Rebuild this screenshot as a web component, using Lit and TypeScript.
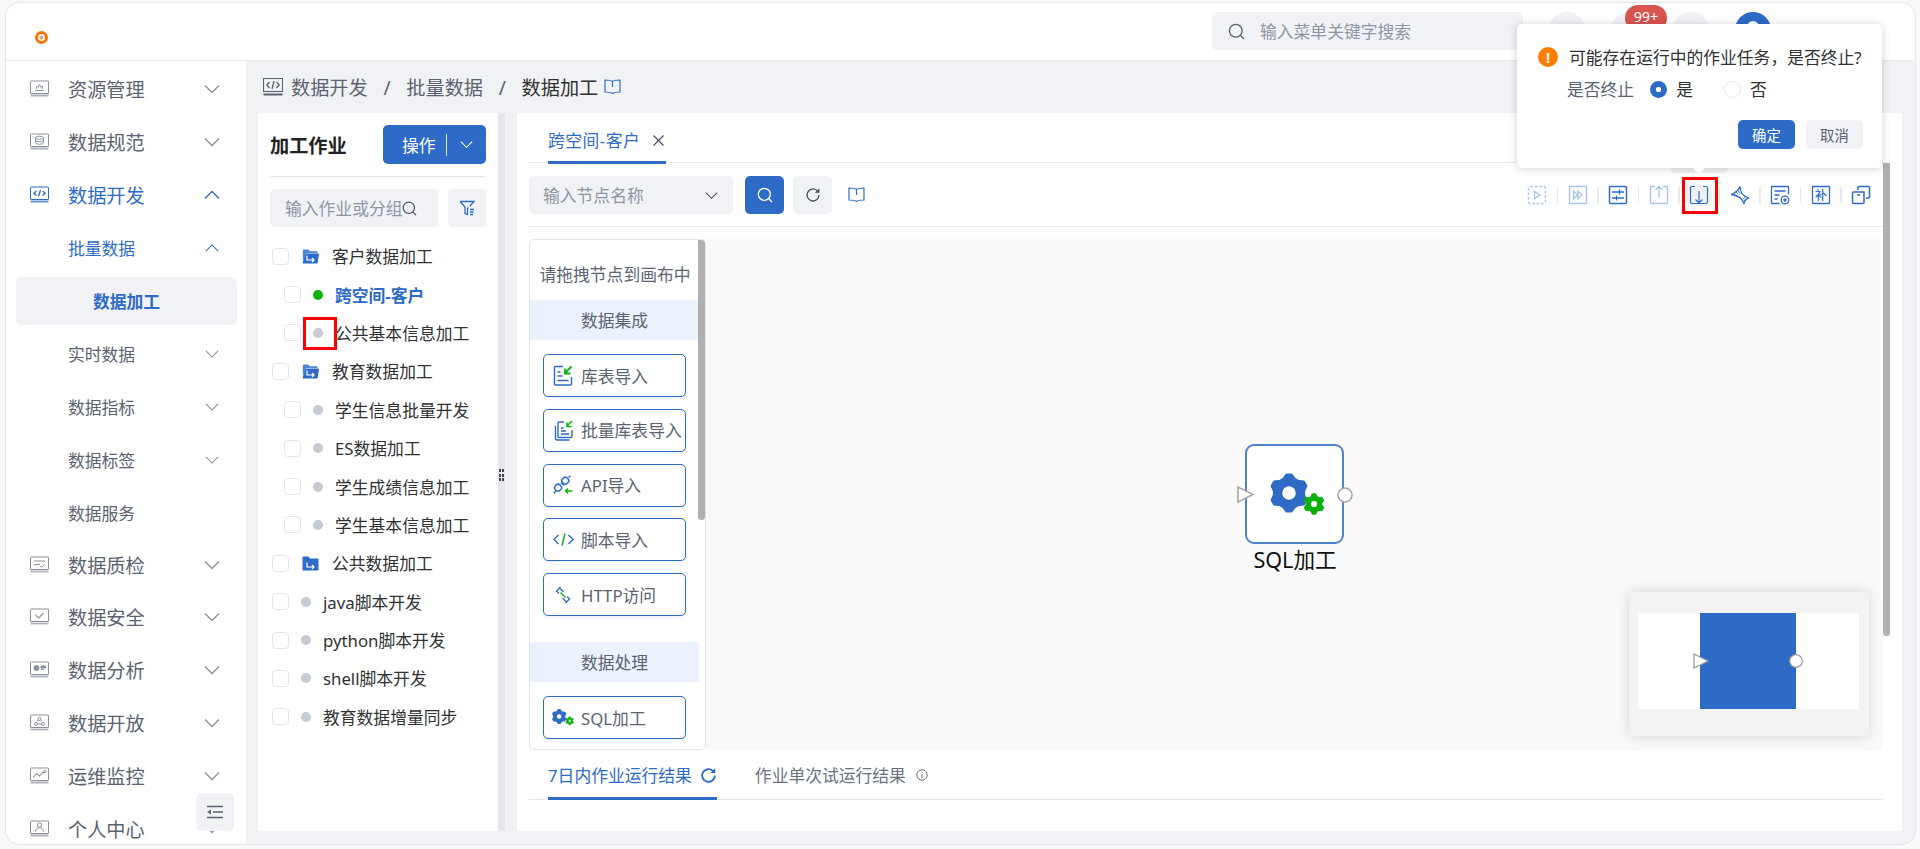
import { LitElement, html, css, svg, TemplateResult, unsafeCSS } from "lit";
import { customElement } from "lit/decorators.js";

const BLUE = "#2e6bc6";
const LIGHT = "#a6c3ea";
const GREEN = "#0bb20c";
const GRAY = "#8b919c";
const B = unsafeCSS(BLUE);

const gearPath = (cx: number, cy: number, R: number, r: number, hole: number, teeth = 6) => {
  let d = "";
  const n = teeth * 4;
  for (let i = 0; i < n; i++) {
    const a = (i / n) * Math.PI * 2 - Math.PI / 2 - Math.PI / n;
    const rad = i % 4 < 2 ? R : r;
    d += `${i ? "L" : "M"}${(cx + rad * Math.cos(a)).toFixed(2)} ${(cy + rad * Math.sin(a)).toFixed(2)}`;
  }
  d += `Z M${cx - hole} ${cy}a${hole} ${hole} 0 1 0 ${hole * 2} 0a${hole} ${hole} 0 1 0 ${-hole * 2} 0Z`;
  return d;
};

const gear = (cx: number, cy: number, R: number, r: number, hole: number, color: string, sw = 1) =>
  svg`<path d=${gearPath(cx, cy, R, r, hole)} fill=${color} fill-rule="evenodd" stroke=${color} stroke-width=${sw} stroke-linejoin="round"/>`;

const chevron = (up: boolean, color: string, w: number) => html`<svg class="chev" width=${w} height=${w} viewBox="0 0 16 16" fill="none" stroke=${color} stroke-width="1.300"><path d=${up ? "M1 11.500 8 4.500l7 7" : "M1 4.500l7 7 7-7"}/></svg>`;

const monitor = (inner: TemplateResult, color = GRAY) => html`<svg class="nav-ic" width="19" height="17" viewBox="0 0 19 17" fill="none" stroke=${color} stroke-width="1">
  <rect x=".5" y="1" width="18" height="12.5" rx=".5"/><path d="M.5 15.500h18" stroke-width="1.800" opacity=".7"/>${inner}</svg>`;

const navIcons: Record<string, TemplateResult> = {
  res: monitor(svg`<path d="M5 10.500h9M6.500 9V6l1.500 1.500L9.500 4.500 11 7.500 12.500 6v3" stroke-width=".9"/>`),
  spec: monitor(svg`<ellipse cx="9.500" cy="4.700" rx="4" ry="1.500"/><path d="M5.500 4.700v5c0 .8 1.800 1.500 4 1.500s4-.7 4-1.500v-5M5.500 7.200c0 .8 1.800 1.500 4 1.500s4-.7 4-1.500"/>`),
  dev: monitor(svg`<path d="M6.500 5 3.800 7.300l2.700 2.300M12.500 5l2.700 2.300-2.700 2.300M10.500 4 8.500 10.500" stroke-width="1.300"/>`, BLUE),
  qa: monitor(svg`<path d="M4 5h11M4 8.500h6M10 10l1.600 1.200L14.500 8.500"/>`),
  sec: monitor(svg`<path d="M5.500 7l3.200 3 4.800-5" stroke-width="1.100"/>`),
  ana: monitor(svg`<circle cx="6.500" cy="7" r="2.600" fill=${GRAY}/><path d="M11 5h4.500v2H11zM11 8.500h3" fill=${GRAY}/>`),
  open: monitor(svg`<circle cx="9.500" cy="4.800" r="1.500"/><circle cx="6" cy="9.800" r="1.500"/><circle cx="13" cy="9.800" r="1.500"/><path d="M7 7.500 8.300 6M12 7.500 10.700 6M7.800 10h3.400"/>`),
  ops: monitor(svg`<path d="M3 10.500l3.500-4 3 2.500L13 5l1.500 1" stroke-width="1.100"/><circle cx="15" cy="4.500" r="1.100"/>`),
  me: monitor(svg`<circle cx="9.500" cy="5" r="2.200"/><path d="M5.500 11.500c.5-2.600 2-3.800 4-3.800s3.500 1.200 4 3.800"/>`),
};

const nav = [
  { t: "资源管理", ic: "res", chev: "d" },
  { t: "数据规范", ic: "spec", chev: "d" },
  { t: "数据开发", ic: "dev", chev: "u", on: true },
  { t: "批量数据", sub: true, chev: "u", on: true },
  { t: "数据加工", active: true },
  { t: "实时数据", sub: true, chev: "d" },
  { t: "数据指标", sub: true, chev: "d" },
  { t: "数据标签", sub: true, chev: "d" },
  { t: "数据服务", sub: true },
  { t: "数据质检", ic: "qa", chev: "d", tight: true },
  { t: "数据安全", ic: "sec", chev: "d", tight: true },
  { t: "数据分析", ic: "ana", chev: "d" },
  { t: "数据开放", ic: "open", chev: "d" },
  { t: "运维监控", ic: "ops", chev: "d" },
  { t: "个人中心", ic: "me", chev: "d" },
];

const folder = (open: boolean) => html`<svg class="folder" width="17" height="15" viewBox="0 0 17 15">
  ${open
    ? svg`<path d="M.8 1.500A1 1 0 0 1 1.800.5h4.400l1.500 1.700h6.800a1 1 0 0 1 1 1V4H4L2.500 8.500.8 12z" fill="#4f86d6"/><path d="M3.600 4.500h12.500a.9.9 0 0 1 .9 1.100l-1.300 8a1 1 0 0 1-1 .9H1.500a.8.8 0 0 1-.8-1z" fill=${BLUE}/>`
    : svg`<path d="M.5 1.500a1 1 0 0 1 1-1h5l1.500 2h7.500a1 1 0 0 1 1 1v10a1 1 0 0 1-1 1h-14a1 1 0 0 1-1-1z" fill=${BLUE}/>`}
  <path d="M5 6.500v4.500h7M10 9l2 2-2 2" fill="none" stroke="#fff" stroke-width="1.200"/></svg>`;

const tree = [
  { t: "客户数据加工", f: "open" },
  { t: "跨空间-客户", lvl: 1, c: "run", cur: true },
  { t: "公共基本信息加工", lvl: 1 },
  { t: "教育数据加工", f: "open" },
  { t: "学生信息批量开发", lvl: 1 },
  { t: "ES数据加工", lvl: 1 },
  { t: "学生成绩信息加工", lvl: 1 },
  { t: "学生基本信息加工", lvl: 1 },
  { t: "公共数据加工", f: "closed" },
  { t: "java脚本开发" },
  { t: "python脚本开发" },
  { t: "shell脚本开发" },
  { t: "教育数据增量同步" },
];

const paletteIc: Record<string, TemplateResult> = {
  table: html`<svg width="20" height="21" viewBox="0 0 20 21" fill="none" stroke=${BLUE} stroke-width="1.400"><path d="M10 1.500H2.500a1 1 0 0 0-1 1V19a1 1 0 0 0 1 1h15a1 1 0 0 0 1-1v-7"/><path d="M4.500 7h3M4.500 11h5M4.500 15.500h11"/><path d="M18.500 1.500 12 8M12 3.500V8.500h5.500" stroke=${GREEN} stroke-width="1.800"/></svg>`,
  batch: html`<svg width="20" height="21" viewBox="0 0 20 21" fill="none" stroke=${BLUE} stroke-width="1.400"><path d="M11 2H6a1 1 0 0 0-1 1v13.500a1 1 0 0 0 1 1h12a1 1 0 0 0 1-1V10"/><path d="M2.500 6v12a2 2 0 0 0 2 2h12"/><path d="M8 8h2.500M8 11h5M8 14h8"/><path d="M19 1 14 6M14 2.500V6.500h4.500" stroke=${GREEN} stroke-width="1.500"/></svg>`,
  api: html`<svg width="20" height="20" viewBox="0 0 20 20" fill="none" stroke=${BLUE} stroke-width="1.500"><rect x="1.800" y="9.500" width="6.500" height="6.500" rx="2.800" transform="rotate(-45 5 12.700)"/><rect x="9" y="2.500" width="6.500" height="6.500" rx="2.800" transform="rotate(-45 12.200 5.700)"/><path d="M1 18.500l1.800-2.500M15.500 2.500 17.500.8M8 7.500l3 3"/><path d="M19.500 16H12.500M15 13.500 12.500 16 15 18.500" stroke=${GREEN}/></svg>`,
  code: html`<svg width="21" height="13" viewBox="0 0 21 13" fill="none" stroke=${BLUE} stroke-width="1.400"><path d="M5.500 2 1 6.500 5.500 11M15.500 2 20 6.500 15.500 11"/><path d="M12 .5 9 12.500" stroke=${GREEN}/></svg>`,
  http: html`<svg width="18" height="18" viewBox="0 0 18 18" fill="none" stroke=${BLUE} stroke-width="1.300"><path d="M6.500 1 2.500 5 5 7.500M5 1.500 9.500 6M11.500 17l4-4L13 10.500M13 16.500 8.500 12"/><path d="M6.500 6.500 11.500 11.500" stroke=${GREEN}/></svg>`,
  gear: html`<svg width="23" height="18" viewBox="0 0 23 18">${gear(7.500, 7.500, 7.300, 5.800, 3, BLUE, 1.200)}${gear(18.500, 12, 4.200, 3.200, 1.600, GREEN, .8)}</svg>`,
};

const palette1 = [
  { t: "库表导入", ic: "table" },
  { t: "批量库表导入", ic: "batch" },
  { t: "API导入", ic: "api" },
  { t: "脚本导入", ic: "code" },
  { t: "HTTP访问", ic: "http" },
];

const tb = (c: string, body: TemplateResult) => html`<svg width="20" height="20" viewBox="0 0 20 20" fill="none" stroke=${c} stroke-width="1.300">${body}</svg>`;

const toolbar: TemplateResult[] = [
  tb(LIGHT, svg`<rect x="1.500" y="1.500" width="17" height="17" rx="2" stroke-dasharray="2.500 2" stroke-width="1.500"/><path d="M7.500 6.500v7l5.500-3.500z"/>`),
  tb(LIGHT, svg`<rect x="1.500" y="1.500" width="17" height="17" rx=".5"/><path d="M5.500 6l4 4-4 4zM10 6l4 4-4 4z"/>`),
  tb(BLUE, svg`<rect x="1.500" y="1.500" width="17" height="17" rx="1" stroke-width="1.500"/><path d="M4 7h12M11.500 4.500v5M4 13h12M8.500 10.500v5"/>`),
  tb(LIGHT, svg`<path d="M6 1.500H2.500a1 1 0 0 0-1 1v15a1 1 0 0 0 1 1h15a1 1 0 0 0 1-1v-15a1 1 0 0 0-1-1H14"/><path d="M10 12.500V1.500M6.500 5 10 1.500 13.500 5"/>`),
  tb(BLUE, svg`<path d="M6 1.500H3a1.500 1.500 0 0 0-1.500 1.500v14A1.500 1.500 0 0 0 3 18.500h14a1.500 1.500 0 0 0 1.500-1.500V3A1.500 1.500 0 0 0 17 1.500h-3" stroke-width="1.200"/><path d="M10 6v12M6.500 14.500 10 18l3.500-3.500" stroke-width="1.200"/>`),
  tb(BLUE, svg`<path d="M1 9.500C5 8 8.500 5.500 10 1.500 10 6 11 10 19 13M1 9.500C6 10 12 12 14 19c.5-3 2-5 5-6" stroke-width="1.300"/><path d="M3.500 8l2 2M5.500 6.500l2.500 3M7.500 4.800 10 8.500M13 14l3-3M14 16l2.500-3" stroke-width=".9"/>`),
  tb(BLUE, svg`<path d="M18.500 9.500V2a.5.5 0 0 0-.5-.5H2a.5.5 0 0 0-.5.5v16a.5.5 0 0 0 .5.500h7.500"/><path d="M4.500 6h11M4.500 10h5M4.500 14h3"/><circle cx="15" cy="15" r="3.800"/><circle cx="15" cy="15" r="1" fill=${BLUE}/>`),
  html`<svg width="20" height="20" viewBox="0 0 20 20" fill="none" stroke=${BLUE} stroke-width="1.300"><rect x="1.500" y="1.500" width="17" height="17" rx=".5"/><text x="10" y="14.500" text-anchor="middle" font-size="12" font-weight="500" fill=${BLUE} stroke="none" font-family="Noto Sans CJK SC">补</text></svg>`,
  tb(BLUE, svg`<path d="M7 5V2.500a1 1 0 0 1 1-1h9.500a1 1 0 0 1 1 1V12a1 1 0 0 1-1 1H15" stroke-width="1.500"/><path d="M13 7H2.500a1 1 0 0 0-1 1v9.500a1 1 0 0 0 1 1H12a1 1 0 0 0 1-1V7zM6 10h3" stroke-width="1.500"/>`),
];

const searchIc = (c: string, s = 16) => html`<svg width=${s} height=${s} viewBox="0 0 16 16" fill="none" stroke=${c} stroke-width="1.300"><circle cx="7.300" cy="7.300" r="6"/><path d="M11.800 11.800 15 15"/></svg>`;
const refreshIc = (c: string, s = 16, w = 1.500) => html`<svg width=${s} height=${s} viewBox="0 0 16 16" fill="none" stroke=${c} stroke-width=${w}><path d="M14 8a6 6 0 1 1-1.900-4.400L14 5.500"/><path d="M14.300 1.200v4.500H9.800" fill=${c} stroke="none"/></svg>`;
const bookIc = html`<svg width="17" height="16" viewBox="0 0 17 16" fill="none" stroke=${BLUE} stroke-width="1.200"><path d="M8.500 2.500C7.500 1.500 5.500 1 1 1v12c4.500 0 6.500.5 7.500 1.500 1-1 3-1.500 7.500-1.500V1c-4.500 0-6.500.5-7.500 1.500zM8.500 2.500V8"/></svg>`;

@customElement("app-root")
export class AppRoot extends LitElement {
  static styles = css`
    :host { display: block; width: 1920px; height: 849px; overflow: hidden; background: #f9f9fa;
      font-family: "Noto Sans", "Noto Sans CJK SC", sans-serif; font-size: 16.8px; color: #303133; }
    * { box-sizing: border-box; }
    .page { position: relative; width: 1920px; height: 849px; padding: 3px 5px 5px 6px; }
    .shell { width: 1909px; height: 841px; border-radius: 14px; overflow: hidden; background: #f0f2f5;
      box-shadow: 0 0 2px rgba(0,0,0,.25); display: flex; flex-direction: column; }

    .top { height: 58px; flex: none; background: #fff; border-bottom: 1px solid #e6e8ec; display: flex; padding: 9px 144px 0 0; gap: 26px; }
    .logo { margin: 18.500px auto 0 29px; width: 13px; height: 13px; }
    .search { width: 311px; height: 38px; background: #f0f2f5; border-radius: 5px; display: flex; align-items: center; gap: 15px; padding-left: 16px; color: #8f96a3; }
    .circle { width: 36px; height: 36px; border-radius: 50%; background: #f0f2f5; position: relative; flex: none; }
    .avatar { background: ${B}; }
    .badge { position: absolute; left: 14px; top: -7px; width: 42px; height: 26px; border-radius: 13px; background: #d9534f; color: #fff; font-size: 14.400px; line-height: 24px; text-align: center; }
    .avatar-dot { position: absolute; left: 12px; top: 9px; width: 12px; height: 12px; border-radius: 50%; background: #fff; }

    .body { flex: 1; display: flex; min-height: 0; }
    .side { width: 240px; flex: none; background: #fff; padding-top: 1px; position: relative; overflow: hidden; color: #5c6370; }
    .row { height: 53px; display: flex; align-items: center; padding: 0 26px 0 24px; font-size: 19.200px; }
    .row.tight { margin-top: -1px; }
    .nav-ic { flex: none; margin-right: 19px; }
    .row .chev { margin-left: auto; }
    .row.on { color: ${B}; }
    .row.sub { padding-left: 62px; font-size: 16.800px; }
    .row.sub .chev { margin-right: 1px; }
    .row.act { padding: 0; }
    .pill { margin-left: 10px; width: 221px; height: 48px; border-radius: 5px; background: #f0f2f5; color: ${B};
      font-size: 16.800px; font-weight: 700; display: flex; align-items: center; justify-content: center; }
    .collapse { position: absolute; right: 12px; bottom: 13px; width: 38px; height: 38px; background: #f0f2f5; border-radius: 5px; display: flex; align-items: center; justify-content: center; }

    .main { flex: 1; min-width: 0; display: flex; flex-direction: column; }
    .crumb { height: 52px; flex: none; display: flex; align-items: center; padding-left: 17px; font-size: 19.200px; color: #5c6370; }
    .crumb svg { margin-right: 8px; }
    .crumb .sl { margin: 0 15.700px; }
    .crumb .cur { color: #303133; }
    .crumb .bk { margin-left: 6px; margin-right: 0; display: flex; }
    .crumb .bk svg { margin: 0; }
    .panels { height: 718px; display: flex; margin-left: 12px; }
    .left { width: 240px; background: #fff; padding: 12px 12px 0; flex: none; }
    .gutter { width: 7px; flex: none; background: #e5e7ec; margin-right: 12px; display: flex; align-items: center; justify-content: center; }
    .dots { display: grid; grid-template-columns: 2px 2px; gap: 1.500px; margin-top: 6px; }
    .dots i { width: 2px; height: 3px; background: #444; }
    .lhead { display: flex; align-items: center; justify-content: space-between; height: 39px; }
    .lhead b { font-size: 19.200px; font-weight: 700; color: #222; }
    .opbtn { width: 103px; height: 39px; background: ${B}; color: #fff; border-radius: 5px; display: flex; align-items: center; font-size: 16.800px; padding-left: 19px; }
    .opbtn .bar { width: 1px; height: 22px; background: #fff; opacity: .8; margin: 0 13px 0 10px; }
    .ldiv { height: 1px; background: #e6e8ec; margin: 12px 0; }
    .lsearch { display: flex; justify-content: space-between; }
    .linput { width: 168px; height: 38px; background: #f0f2f5; border-radius: 5px; display: flex; align-items: center; padding-left: 15px; color: #8f96a3; white-space: nowrap; overflow: hidden; }
    .filter { width: 38px; height: 38px; background: #f0f2f5; border-radius: 5px; display: flex; align-items: center; justify-content: center; }
    .tree { margin-top: 10px; }
    .node { height: 38.400px; display: flex; align-items: center; padding-left: 2px; white-space: nowrap; }
    .node.l1 { padding-left: 14px; }
    .ck { width: 17px; height: 17px; border: 1.500px solid #e3e5ea; border-radius: 4px; background: #fff; flex: none; }
    .dot { width: 10px; height: 10px; border-radius: 50%; background: #c6cad3; flex: none; margin: 0 12px 0 12px; }
    .dot.run { background: ${unsafeCSS(GREEN)}; }
    .folder { margin: 0 13px 0 13px; flex: none; }
    .node.cur { color: ${B}; font-weight: 700; }

    .right { width: 1385px; flex: none; background: #fff; padding: 0 19px 0 12px; position: relative; display: flex; flex-direction: column; }
    .tabs { height: 50px; flex: none; border-bottom: 1px solid #e6e8ec; display: flex; padding-left: 19px; gap: 48px; }
    .tab { height: 51px; display: flex; align-items: center; padding-top: 6px; color: #6a7280; gap: 8px; white-space: nowrap; border-bottom: 3px solid transparent; }
    .tab.on { color: ${B}; border-bottom-color: ${B}; }
    .tabs .tab { padding-right: 2px; letter-spacing: .5px; }
    .x { margin-left: 5px; }
    .bar2 { height: 64px; flex: none; border-bottom: 1px solid #e6e8ec; display: flex; align-items: flex-start; padding-top: 13px; }
    .sel { width: 204px; height: 38px; background: #f0f2f5; border-radius: 5px; display: flex; align-items: center; justify-content: space-between; padding: 0 15px 0 14px; color: #8f96a3; }
    .btn { width: 39px; height: 38px; border-radius: 5px; background: #f0f2f5; display: flex; align-items: center; justify-content: center; margin-left: 9px; }
    .btn.p { background: ${B}; margin-left: 12px; }
    .bk2 { height: 38px; margin-left: 16px; display: flex; align-items: center; }
    .tools { margin-left: auto; margin-right: 2.500px; display: flex; align-items: center; height: 38px; }
    .tool { width: 26px; height: 22px; margin: 0 6.500px; display: flex; align-items: center; justify-content: center; border-radius: 3px; }
    .tool.hov { background: #f0f2f5; }
    .sep { width: 1.500px; height: 16px; background: #e6e8ec; flex: none; }

    .stage { margin-top: 12px; height: 511px; flex: none; display: flex; }
    .pal { width: 177px; flex: none; border: 1px solid #e3e5ea; border-radius: 5px; background: #fff; position: relative; overflow: hidden; color: #5c6370; }
    .pal-title { height: 60px; padding-top: 25px; line-height: 20px; text-align: center; width: 170px; white-space: nowrap; }
    .sec { width: 169px; height: 40px; background: #ebf2fd; display: flex; align-items: center; justify-content: center; }
    .items { padding: 14px 0 0 13px; display: flex; flex-direction: column; gap: 11.750px; }
    .item { width: 143px; height: 43px; border: 1px solid ${B}; border-radius: 5px; background: #fff; box-shadow: 0 1px 4px rgba(46,107,198,.12); display: flex; align-items: center; padding-left: 8px; white-space: nowrap; }
    .item .ib { width: 22px; display: flex; justify-content: center; flex: none; margin-right: 7px; }
    .items + .sec { margin-top: 26px; }
    .thumb { position: absolute; right: 0; top: 0; width: 7px; height: 280px; background: #b0b0b0; border-radius: 0 0 4px 4px; }
    .canvas { flex: 1; background: #f9f9fa; position: relative; overflow: hidden; }
    .gnode { position: absolute; left: 539px; top: 205px; width: 99px; height: 100px; border: 2px solid #4f82cd; border-radius: 9px; background: #fff; }
    .port { position: absolute; overflow: visible; }
    .port-in { left: -10px; top: 40px; }
    .port-out { left: 89px; top: 40px; }
    .port-g { left: 24px; top: 25px; }
    .glabel { position: absolute; left: 499px; width: 180px; top: 307px; text-align: center; font-size: 21.600px; line-height: 28px; color: #111; }
    .mini { position: absolute; right: 14px; bottom: 14px; width: 240px; height: 144px; background: #f3f3f3; box-shadow: 0 0 12px rgba(0,0,0,.14); padding: 21px 10px 0 9px; }
    .mini-in { height: 96px; background: #fff; position: relative; }
    .mini-b { position: absolute; left: 62px; top: 0; width: 96px; height: 96px; background: ${B}; }
    .mini svg { position: absolute; overflow: visible; }
    .m-in { left: 55px; top: 40px; }
    .m-out { left: 151px; top: 41px; }
    .foot { height: 50px; flex: none; border-bottom: 1px solid #e6e8ec; display: flex; padding-left: 19px; gap: 38px; }
    .foot .tab { height: 50px; padding-top: 3px; }
    .inf { margin-left: 2px; }
    .vbar { position: absolute; right: 12px; top: 50px; width: 7px; height: 473px; background: #b0b0b0; border-radius: 0 0 4px 4px; }

    .pop { position: absolute; left: 1517px; top: 24px; width: 365px; height: 144px; background: #fff; border-radius: 5px; box-shadow: 0 1px 10px rgba(0,0,0,.18); padding: 21px 19px 0 21px; }
    .pop::after { content: ""; position: absolute; left: 176px; top: 144px; border: 6px solid transparent; border-top-color: #fff; }
    .pop-ghost { position: absolute; left: 1670px; top: 160px; width: 58px; height: 13px; background: #f0f1f3; border-radius: 0 0 6px 6px; }
    .pop-t { display: flex; align-items: center; height: 24px; gap: 11px; white-space: nowrap; color: #303133; }
    .warn { width: 20px; height: 20px; border-radius: 50%; background: #ff7d00; color: #fff; font-size: 14.400px; font-weight: 700; display: flex; align-items: center; justify-content: center; flex: none; }
    .pop-r { display: flex; align-items: center; height: 24px; margin: 8px 0 0 29px; color: #5c6370; white-space: nowrap; }
    .radio { width: 17px; height: 17px; border-radius: 50%; flex: none; }
    .radio.on { background: radial-gradient(circle, #fff 0 2.500px, ${B} 3px); margin: 0 9px 0 16px; }
    .radio.off { border: 1.500px solid #e3e5ea; margin: 0 9px 0 31px; }
    .pop-r em { font-style: normal; color: #303133; }
    .pop-b { display: flex; justify-content: flex-end; gap: 11px; margin-top: 19px; }
    .pb { width: 57px; height: 29px; border-radius: 5px; font-size: 14.400px; display: flex; align-items: center; justify-content: center; background: #f0f2f5; color: #5c6370; }
    .pb.p { background: ${B}; color: #fff; }
    .mark { position: absolute; border: 3.500px solid #f00; pointer-events: none; }
    .m1 { left: 303px; top: 317px; width: 34px; height: 33px; }
    .m2 { left: 1682px; top: 177px; width: 36px; height: 37px; }
  `;

  render() {
    return html`<div class="page">
      <div class="shell">
        <div class="top">
          <svg class="logo" viewBox="0 0 13 13"><circle cx="6.500" cy="6.500" r="5" fill="#fff" stroke="#f5740a" stroke-width="3"/><path d="M4.500 5h4v2L6.500 9 4.500 7z" fill="#f5a05a"/></svg>
          <div class="search">${searchIc("#5c6370", 17)}<span>输入菜单关键字搜索</span></div>
          <div class="circle"></div>
          <div class="circle"><div class="badge">99+</div></div>
          <div class="circle"></div>
          <div class="circle avatar"><div class="avatar-dot"></div></div>
        </div>
        <div class="body">
          <div class="side">
            ${nav.map((n) => n.active
              ? html`<div class="row act"><div class="pill">${n.t}</div></div>`
              : html`<div class="row ${n.sub ? "sub" : ""} ${n.on ? "on" : ""} ${n.tight ? "tight" : ""}">
                  ${n.ic ? navIcons[n.ic] : ""}<span>${n.t}</span>
                  ${n.chev ? chevron(n.chev === "u", n.on ? BLUE : GRAY, n.sub ? 14 : 16) : ""}
                </div>`)}
            <div class="collapse"><svg width="18" height="14" viewBox="0 0 18 14" fill="none" stroke="#5c6370" stroke-width="1.500"><path d="M1 1.500h16M7 7h10M1 12.500h16"/><path d="M5 4.500v5L1 7z" fill="#5c6370" stroke="none"/></svg></div>
          </div>
          <div class="main">
            <div class="crumb">
              <svg width="20" height="18" viewBox="0 0 20 18" fill="none" stroke="#5c6370" stroke-width="1.100"><rect x=".5" y=".5" width="19" height="13"/><path d="M.5 16.500h19" stroke-width="1.800"/><path d="M6.500 4 3.800 7l2.700 3M13.500 4l2.700 3-2.700 3M11 3 9 11" stroke-width="1.300"/></svg>
              <span>数据开发</span><span class="sl">/</span><span>批量数据</span><span class="sl">/</span><span class="cur">数据加工</span>
              <span class="bk">${bookIc}</span>
            </div>
            <div class="panels">
              <div class="left">
                <div class="lhead"><b>加工作业</b>
                  <div class="opbtn"><span>操作</span><span class="bar"></span>${chevron(false, "#fff", 13)}</div>
                </div>
                <div class="ldiv"></div>
                <div class="lsearch">
                  <div class="linput"><span>输入作业或分组</span>${searchIc("#4a5160", 15)}</div>
                  <div class="filter"><svg width="16" height="16" viewBox="0 0 16 16" fill="none" stroke=${BLUE} stroke-width="1.300"><path d="M1 1.500h14L11 6M9.500 7.500 8.500 8.500v6L6 13.500V7L1 1.500M11 9.500h4M11 12h3.500M11 14.500h3"/></svg></div>
                </div>
                <div class="tree">
                  ${tree.map((n) => html`<div class="node ${n.lvl ? "l1" : ""} ${n.cur ? "cur" : ""}">
                    <span class="ck"></span>
                    ${n.f ? folder(n.f === "open") : html`<span class="dot ${n.c || ""}"></span>`}
                    <span>${n.t}</span>
                  </div>`)}
                </div>
              </div>
              <div class="gutter"><div class="dots"><i></i><i></i><i></i><i></i><i></i><i></i></div></div>
              <div class="right">
                <div class="tabs"><div class="tab on">跨空间-客户
                  <svg class="x" width="11" height="11" viewBox="0 0 11 11" stroke="#4a5160" stroke-width="1.200"><path d="M.5.5l10 10M10.500.5l-10 10"/></svg></div></div>
                <div class="bar2">
                  <div class="sel"><span>输入节点名称</span>${chevron(false, "#4a5160", 13)}</div>
                  <div class="btn p">${searchIc("#fff", 16)}</div>
                  <div class="btn">${refreshIc("#4a5160", 16, 1.300)}</div>
                  <div class="bk2">${bookIc}</div>
                  <div class="tools">
                    ${toolbar.map((t, i) => html`${i ? html`<span class="sep"></span>` : ""}<span class="tool ${i === 4 ? "hov" : ""}">${t}</span>`)}
                  </div>
                </div>
                <div class="stage">
                  <div class="pal">
                    <div class="pal-title">请拖拽节点到画布中</div>
                    <div class="sec">数据集成</div>
                    <div class="items">${palette1.map((p) => html`<div class="item"><span class="ib">${paletteIc[p.ic]}</span>${p.t}</div>`)}</div>
                    <div class="sec">数据处理</div>
                    <div class="items"><div class="item"><span class="ib">${paletteIc.gear}</span>SQL加工</div></div>
                    <div class="thumb"></div>
                  </div>
                  <div class="canvas">
                    <div class="gnode">
                      <svg class="port port-in" width="18" height="17" viewBox="0 0 18 17"><path d="M1 1v15l15-7.500z" fill="#fff" stroke="#a8a8a8" stroke-width="1.600"/></svg>
                      <svg class="port port-out" width="18" height="18" viewBox="0 0 18 18"><circle cx="9" cy="9" r="7" fill="#fff" stroke="#a8a8a8" stroke-width="1.600"/></svg>
                      <svg class="port port-g" width="60" height="46" viewBox="0 0 60 46">${gear(18, 22, 18.500, 15, 8, BLUE, 2.500)}${gear(43, 33, 10, 7.500, 4, GREEN, 1.800)}</svg>
                    </div>
                    <div class="glabel">SQL加工</div>
                    <div class="mini"><div class="mini-in"><div class="mini-b"></div>
                      <svg class="m-in" width="16" height="16" viewBox="0 0 16 16"><path d="M1 1v14l14-7z" fill="#fff" stroke="#999" stroke-width="1.200"/></svg>
                      <svg class="m-out" width="14" height="14" viewBox="0 0 14 14"><circle cx="7" cy="7" r="6.300" fill="#fff" stroke="#999" stroke-width="1.200"/></svg>
                    </div></div>
                  </div>
                </div>
                <div class="foot">
                  <div class="tab on">7日内作业运行结果 ${refreshIc(BLUE, 17, 1.800)}</div>
                  <div class="tab">作业单次试运行结果
                    <svg class="inf" width="12" height="12" viewBox="0 0 12 12" fill="none" stroke="#6a7280"><circle cx="6" cy="6" r="5.200"/><path d="M6 3v.9M6 5v4"/></svg></div>
                </div>
                <div class="vbar"></div>
              </div>
            </div>
          </div>
        </div>
      </div>
      <div class="pop-ghost"></div>
      <div class="pop">
        <div class="pop-t"><span class="warn">!</span><span>可能存在运行中的作业任务，是否终止?</span></div>
        <div class="pop-r"><span>是否终止</span><span class="radio on"></span><em>是</em><span class="radio off"></span><em>否</em></div>
        <div class="pop-b"><div class="pb p">确定</div><div class="pb">取消</div></div>
      </div>
      <div class="mark m1"></div>
      <div class="mark m2"></div>
    </div>`;
  }
}
